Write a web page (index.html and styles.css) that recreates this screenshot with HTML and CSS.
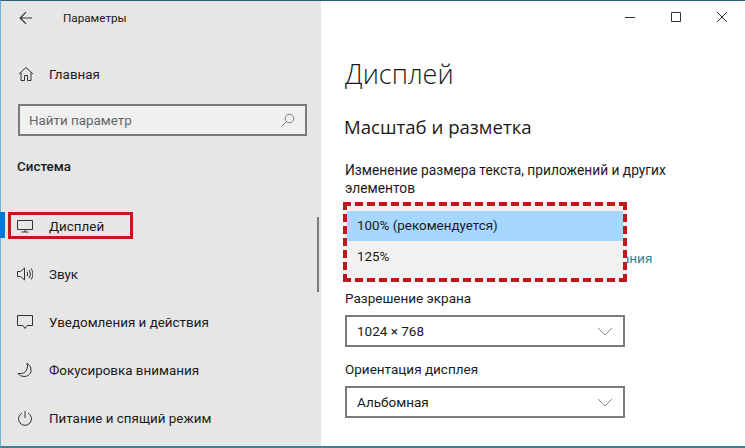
FILE: index.html
```html
<!DOCTYPE html>
<html lang="ru">
<head>
  <meta charset="UTF-8">
  <title>Параметры</title>
  <link rel="stylesheet" href="styles.css">
</head>
<body>
  <div class="window">
    <aside class="sidebar">
      <div class="titlebar">
        <svg class="back" width="14" height="14" viewBox="0 0 14 14"><path d="M13 7H1.5M7 1.2 1.2 7 7 12.8"/></svg>
        <span>Параметры</span>
      </div>

      <a class="home">
        <svg class="icon" width="16" height="16" viewBox="0 0 16 16"><path d="M1 8 8 1.5 15 8M3 6.5V14.5H6.5V9.5H9.5V14.5H13V6.5"/></svg>
        <span>Главная</span>
      </a>

      <div class="search">
        <span>Найти параметр</span>
        <svg class="icon" width="14" height="14" viewBox="0 0 14 14"><circle cx="8.5" cy="5.5" r="4.3"/><path d="M5.4 8.6 1 13"/></svg>
      </div>

      <h2 class="group">Система</h2>

      <nav class="nav">
        <a class="nav-item active">
          <svg class="icon" width="16" height="14" viewBox="0 0 16 14"><path d="M.5 1.5H15.5V10.500H.5ZM8 10.500V13M4.500 13H11.500"/></svg>
          <span>Дисплей</span>
          <i class="mark"></i>
        </a>
        <a class="nav-item">
          <svg class="icon" width="16" height="14" viewBox="0 0 16 14"><path d="M.5 4.500H3.500L7.500 1V13L3.500 9.500H.5ZM10 4.800Q11.500 7 10 9.200M12.200 3Q14.800 7 12.200 11M14.200 1.500Q17.600 7 14.200 12.500"/></svg>
          <span>Звук</span>
        </a>
        <a class="nav-item">
          <svg class="icon" width="16" height="16" viewBox="0 0 16 16"><path d="M.5 1.500H15.500V11.500H10L8 14.500 6 11.500H.5Z"/></svg>
          <span>Уведомления и действия</span>
        </a>
        <a class="nav-item">
          <svg class="icon" width="16" height="16" viewBox="0 0 16 16"><path d="M10 1Q15 4.500 14.200 9.500 12.500 14.500 7 14.500 3 14.500 1 11.500 8 12.500 10 7 11 4 10 1Z"/></svg>
          <span>Фокусировка внимания</span>
        </a>
        <a class="nav-item">
          <svg class="icon" width="16" height="16" viewBox="0 0 16 16"><path d="M8 1V8M4.800 3.200A6.500 6.500 0 1 0 11.200 3.200"/></svg>
          <span>Питание и спящий режим</span>
        </a>
      </nav>
      <i class="scrollbar"></i>
    </aside>

    <main class="content">
      <div class="controls">
        <svg width="12" height="12" viewBox="0 0 12 12"><path d="M1 6.500H11"/></svg>
        <svg width="12" height="12" viewBox="0 0 12 12"><path d="M1.500 1.500H10.500V10.500H1.500Z"/></svg>
        <svg width="12" height="12" viewBox="0 0 12 12"><path d="M1 1 11 11M11 1 1 11"/></svg>
      </div>

      <h1>Дисплей</h1>
      <h3>Масштаб и разметка</h3>
      <p class="label scale-label">Изменение размера текста, приложений и других элементов</p>

      <a class="link">Дополнительные параметры масштабирования</a>

      <p class="label">Разрешение экрана</p>
      <div class="select">
        <span>1024 × 768</span>
        <svg width="16" height="9" viewBox="0 0 16 9"><path d="M1 1 8 8 15 1"/></svg>
      </div>

      <p class="label">Ориентация дисплея</p>
      <div class="select">
        <span>Альбомная</span>
        <svg width="16" height="9" viewBox="0 0 16 9"><path d="M1 1 8 8 15 1"/></svg>
      </div>

      <div class="popup">
        <ul class="options">
          <li class="selected">100% (рекомендуется)</li>
          <li>125%</li>
        </ul>
      </div>
    </main>
  </div>
</body>
</html>
```

FILE: styles.css
```css
html, body {
  margin: 0;
  height: 100%;
}
body {
  font-family: Roboto, "Open Sans", Arial, sans-serif;
  font-size: 13.5px;
  color: #1a1a1a;
  overflow: hidden;
}
svg {
  fill: none;
  stroke: #333;
  stroke-width: 1;
  flex: none;
}
.window {
  display: flex;
  height: 448px;
  box-sizing: border-box;
  border-top: 1px solid #2f5f73;
  border-bottom: 2px solid #3d8296;
  border-left: 1px solid #6fb2d6;
}

/* left column */
.sidebar {
  position: relative;
  width: 320px;
  background: #e6e6e6;
  padding-left: 17px;
  box-sizing: border-box;
  font-size: 13.4px;
}
.titlebar {
  display: flex;
  align-items: center;
  gap: 30px;
  height: 34px;
  font-size: 11.7px;
}
.back {
  stroke-width: 1.2;
  margin-left: 1px;
}
.home {
  display: flex;
  align-items: center;
  gap: 15px;
  margin-top: 22px;
  height: 34px;
}
.search {
  display: flex;
  align-items: center;
  justify-content: space-between;
  width: 289px;
  height: 32px;
  margin-top: 13px;
  padding: 0 10px 0 9px;
  box-sizing: border-box;
  border: 2px solid #7a7a7a;
  background: #f0f0f0;
  color: #666;
}
.search svg {
  stroke: #777;
}
.group {
  margin: 22px 0 0 -1px;
  font-size: 13.4px;
  font-weight: 500;
  line-height: 18px;
}
.nav {
  margin-top: 26px;
  margin-left: -1px;
}
.nav-item {
  position: relative;
  display: flex;
  align-items: center;
  gap: 16px;
  height: 48px;
}
.nav-item .icon {
  width: 16px;
}
.active::before {
  content: "";
  position: absolute;
  left: -17px;
  top: 10px;
  width: 5px;
  height: 26px;
  background: #0078d7;
}
.mark {
  position: absolute;
  left: -9px;
  top: 10px;
  width: 125px;
  height: 27px;
  box-sizing: border-box;
  border: 3px solid #c4161f;
}
.scrollbar {
  position: absolute;
  left: 316px;
  top: 216px;
  width: 2px;
  height: 75px;
  background: #7d7d7d;
}

/* right column */
.content {
  position: relative;
  flex: 1;
  padding-left: 24px;
  background: #fff;
}
.controls {
  display: flex;
  justify-content: flex-end;
  gap: 34px;
  height: 34px;
  padding: 10px 17px 0 0;
  box-sizing: border-box;
}
.content h1 {
  margin: 19px 0 0;
  font-family: "Open Sans", Roboto, sans-serif;
  font-size: 27px;
  font-weight: 300;
  line-height: 40px;
}
.content h3 {
  margin: 20px 0 0 -1px;
  font-family: "Open Sans", Roboto, sans-serif;
  font-size: 18.6px;
  font-weight: 400;
  line-height: 26px;
}
.label {
  margin: 0;
  width: 340px;
  line-height: 18px;
}
.scale-label {
  margin-top: 21px;
  font-size: 13.75px;
}
.link {
  display: block;
  margin-top: 52px;
  font-size: 13.55px;
  line-height: 18px;
  color: #2a7f9e;
  white-space: nowrap;
}
.link + .label {
  margin-top: 22px;
}
.select {
  display: flex;
  align-items: center;
  justify-content: space-between;
  width: 280px;
  height: 32px;
  margin: 8px 0 13px;
  padding: 0 10px;
  box-sizing: border-box;
  border: 2px solid #7a7a7a;
}
.select svg {
  stroke: #888;
}

/* open dropdown over the scale setting */
.popup {
  position: absolute;
  left: 22px;
  top: 201px;
  width: 284px;
  height: 80px;
  padding-top: 5px;
  box-sizing: border-box;
  border: 4px dashed #c4161f;
  background: #fbeeee;
  font-size: 13.4px;
}
.options {
  margin: 0;
  padding: 0;
  list-style: none;
  background: #f2f2f2;
  height: 100%;
}
.options li {
  height: 31px;
  line-height: 31px;
  padding-left: 10px;
}
.options .selected {
  height: 30px;
  line-height: 30px;
  background: #a6d8ff;
}
```
